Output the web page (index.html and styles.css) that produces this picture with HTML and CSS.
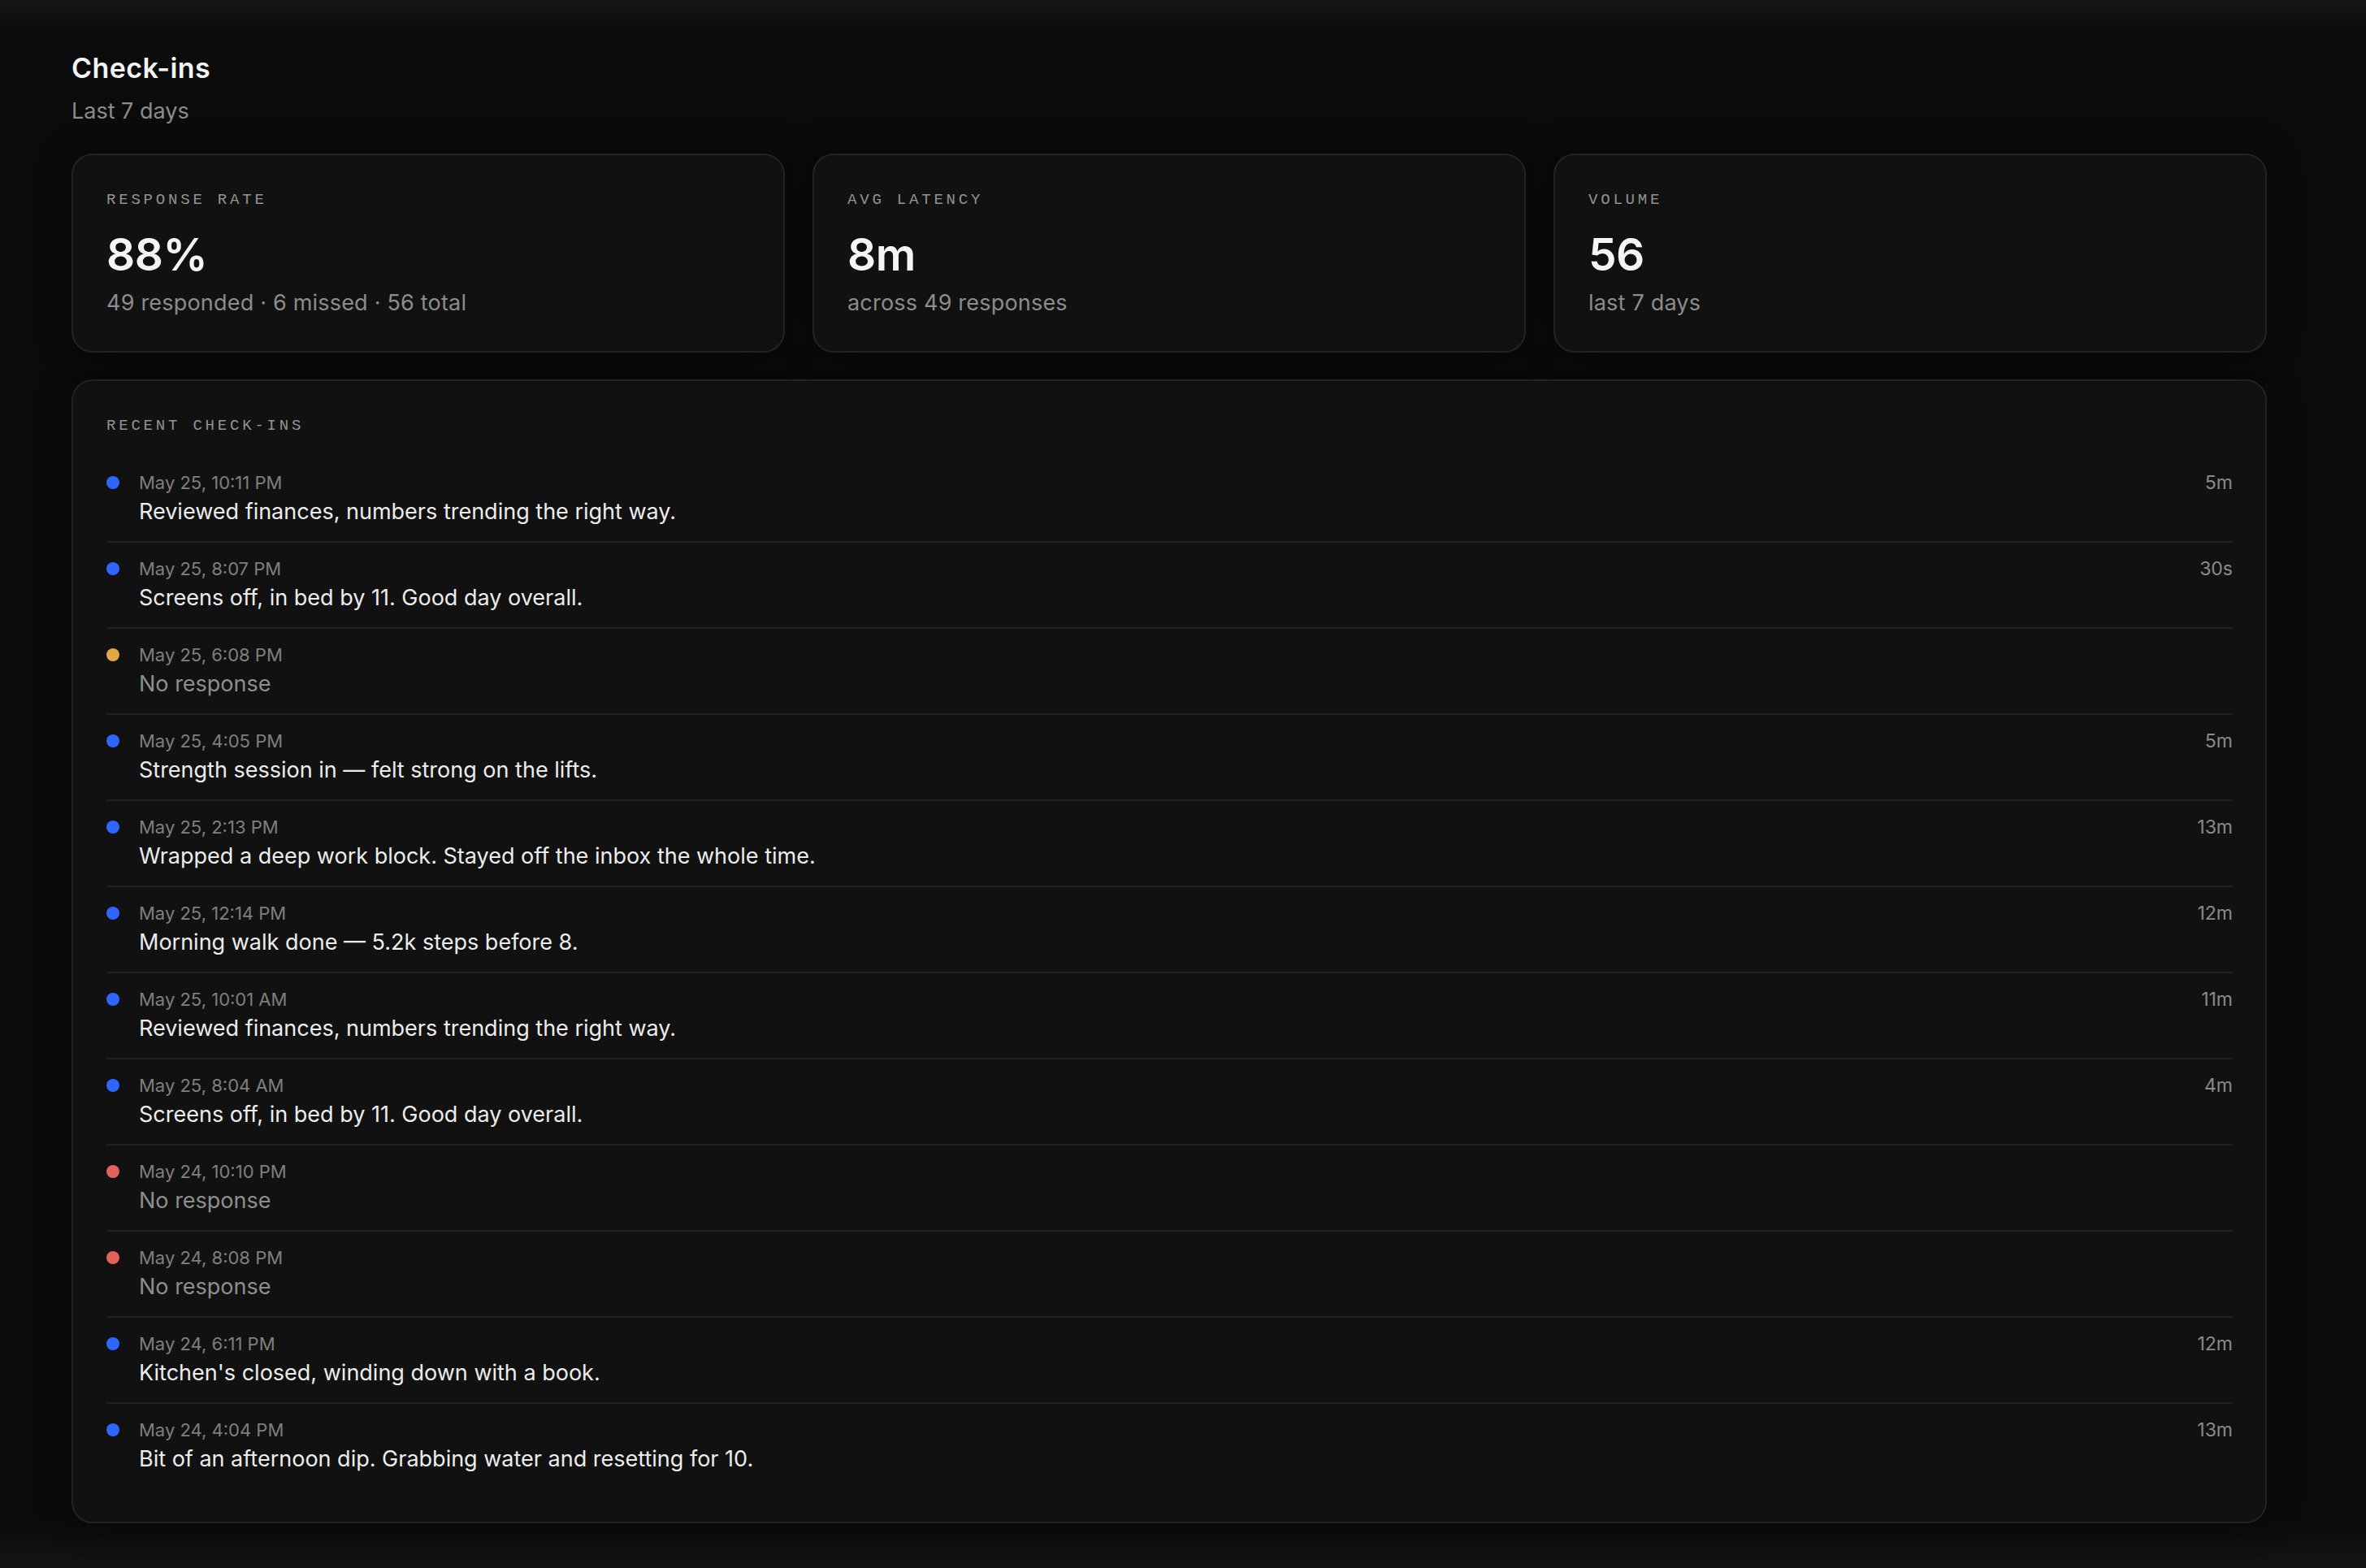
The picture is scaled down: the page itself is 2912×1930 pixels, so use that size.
FILE: index.html
```html
<!DOCTYPE html>
<html lang="en">
<head>
<meta charset="utf-8">
<title>Check-ins</title>
<link rel="stylesheet" href="styles.css">
</head>
<body>
<main class="page">
  <header class="head">
    <h1 class="title">Check-ins</h1>
    <p class="subtitle">Last 7 days</p>
  </header>

  <section class="stats">
    <div class="card stat">
      <div class="label">Response rate</div>
      <div class="value">88%</div>
      <div class="sub">49 responded · 6 missed · 56 total</div>
    </div>
    <div class="card stat">
      <div class="label">Avg latency</div>
      <div class="value">8m</div>
      <div class="sub">across 49 responses</div>
    </div>
    <div class="card stat">
      <div class="label">Volume</div>
      <div class="value">56</div>
      <div class="sub">last 7 days</div>
    </div>
  </section>

  <section class="card recent">
    <div class="label">Recent check-ins</div>
    <ul class="list">
      <li class="row"><span class="dot blue"></span><div class="meta"><div class="date">May 25, 10:11 PM</div><div class="msg">Reviewed finances, numbers trending the right way.</div></div><span class="lat">5m</span></li>
      <li class="row"><span class="dot blue"></span><div class="meta"><div class="date">May 25, 8:07 PM</div><div class="msg">Screens off, in bed by 11. Good day overall.</div></div><span class="lat">30s</span></li>
      <li class="row"><span class="dot amber"></span><div class="meta"><div class="date">May 25, 6:08 PM</div><div class="msg none">No response</div></div><span class="lat"></span></li>
      <li class="row"><span class="dot blue"></span><div class="meta"><div class="date">May 25, 4:05 PM</div><div class="msg">Strength session in — felt strong on the lifts.</div></div><span class="lat">5m</span></li>
      <li class="row"><span class="dot blue"></span><div class="meta"><div class="date">May 25, 2:13 PM</div><div class="msg">Wrapped a deep work block. Stayed off the inbox the whole time.</div></div><span class="lat">13m</span></li>
      <li class="row"><span class="dot blue"></span><div class="meta"><div class="date">May 25, 12:14 PM</div><div class="msg">Morning walk done — 5.2k steps before 8.</div></div><span class="lat">12m</span></li>
      <li class="row"><span class="dot blue"></span><div class="meta"><div class="date">May 25, 10:01 AM</div><div class="msg">Reviewed finances, numbers trending the right way.</div></div><span class="lat">11m</span></li>
      <li class="row"><span class="dot blue"></span><div class="meta"><div class="date">May 25, 8:04 AM</div><div class="msg">Screens off, in bed by 11. Good day overall.</div></div><span class="lat">4m</span></li>
      <li class="row"><span class="dot red"></span><div class="meta"><div class="date">May 24, 10:10 PM</div><div class="msg none">No response</div></div><span class="lat"></span></li>
      <li class="row"><span class="dot red"></span><div class="meta"><div class="date">May 24, 8:08 PM</div><div class="msg none">No response</div></div><span class="lat"></span></li>
      <li class="row"><span class="dot blue"></span><div class="meta"><div class="date">May 24, 6:11 PM</div><div class="msg">Kitchen's closed, winding down with a book.</div></div><span class="lat">12m</span></li>
      <li class="row"><span class="dot blue"></span><div class="meta"><div class="date">May 24, 4:04 PM</div><div class="msg">Bit of an afternoon dip. Grabbing water and resetting for 10.</div></div><span class="lat">13m</span></li>
    </ul>
  </section>
</main>
</body>
</html>
```

FILE: styles.css
```css
* { box-sizing: border-box; }

html, body {
  margin: 0;
  height: 100%;
}

body {
  background:
    linear-gradient(to bottom, #161616 0, #0b0b0b 40px, #0b0b0b calc(100% - 60px), #141414 100%),
    #0b0b0b;
  font-family: Inter, "Noto Sans", sans-serif;
  color: #f0f0f0;
}

.page {
  padding: 64px 122px 0 88px;
}

.head {
  margin-bottom: 34px;
}

.title {
  margin: 0;
  font-size: 34px;
  line-height: 40px;
  font-weight: 600;
  color: #f3f3f3;
  letter-spacing: 0.4px;
}

.subtitle {
  margin: 15px 0 0;
  font-size: 27px;
  line-height: 36px;
  color: #8b8b8b;
}

.stats {
  display: grid;
  grid-template-columns: repeat(3, 1fr);
  gap: 34px;
  margin-bottom: 33px;
}

.card {
  background: #111111;
  border: 2px solid #232323;
  border-radius: 26px;
  box-shadow: 0 0 40px rgba(0, 0, 0, 0.45);
}

.stat {
  padding: 43px 41px 41px;
}

.label {
  font-family: "Liberation Mono", "DejaVu Sans Mono", monospace;
  font-size: 19px;
  line-height: 24px;
  letter-spacing: 3.8px;
  text-transform: uppercase;
  color: #939393;
}

.value {
  margin-top: 25px;
  font-size: 55px;
  line-height: 60px;
  font-weight: 600;
  color: #f5f5f5;
  letter-spacing: -0.5px;
}

.sub {
  margin-top: 12px;
  font-size: 27px;
  line-height: 36px;
  color: #8c8c8c;
  letter-spacing: 0.2px;
}

.recent {
  padding: 43px 40px 41px 41px;
}

.list {
  list-style: none;
  margin: 26px 0 0;
  padding: 0;
}

.row {
  display: grid;
  grid-template-columns: 16px 1fr auto;
  column-gap: 24px;
  padding: 16px 0 16px;
  border-bottom: 2px solid #222222;
}

.row:last-child {
  border-bottom: none;
}

.dot {
  width: 16px;
  height: 16px;
  border-radius: 50%;
  margin-top: 8px;
}

.blue { background: #2f66ff; }
.amber { background: #e1a845; }
.red { background: #e2625c; }

.date {
  font-size: 22px;
  line-height: 32px;
  color: #7f7f7f;
}

.msg {
  font-size: 27px;
  line-height: 40px;
  color: #ececec;
}

.msg.none {
  color: #8e8e8e;
}

.lat {
  font-size: 23px;
  line-height: 32px;
  color: #8a8a8a;
  text-align: right;
}
```
